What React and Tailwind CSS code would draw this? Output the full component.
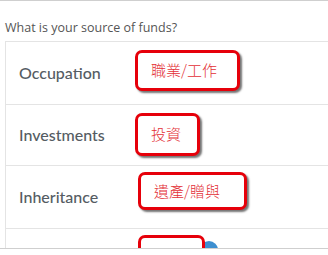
import React from 'react'

const rows = [
  { label: 'Occupation', note: '職業/工作', h: 'h-[63px]', box: 'ml-[26px] -mt-[6px] h-[41px] w-[105px]' },
  { label: 'Investments', note: '投資', h: 'h-[61px]', box: 'ml-[26px] -mt-[2px] h-[43px] w-[65px]' },
  { label: 'Inheritance', note: '遺產/贈與', h: 'h-[63px]', box: 'ml-[29px] -mt-[12px] h-[38px] w-[109px]' },
]

function Note({ text, className }) {
  return (
    <div
      className={`flex items-center pl-[13px] border-[3.5px] border-[#e6000a] rounded-[7px] bg-white shadow-[2px_2px_2px_rgba(0,0,0,0.55)] text-[15px] font-light text-[#e33036] ${className}`}
      style={{ fontFamily: '"Noto Sans CJK TC", sans-serif' }}
    >
      {text}
    </div>
  )
}

export default function App() {
  return (
    <div className="w-[328px] h-[255px] bg-white overflow-hidden border-t border-[#cfcfcf]">
      <div className="h-[248px] border-b border-[#cfcfcf] overflow-hidden pl-[5px]">
        {/* Question */}
        <p
          className="pt-[20px] text-[12.5px] leading-[14px] text-[#555]"
          style={{ fontFamily: '"Open Sans", sans-serif' }}
        >
          What is your source of funds?
        </p>

        {/* Options card */}
        <div className="mt-[6px] border-l border-t border-[#e4e4e4]">
          {rows.map((row) => (
            <div key={row.label} className={`flex items-center border-b border-[#e4e4e4] ${row.h}`}>
              <span
                className="pl-[13px] w-[103px] text-[16px] font-medium text-[#555c63]"
                style={{ fontFamily: 'Lato, sans-serif' }}
              >
                {row.label}
              </span>
              <Note text={row.note} className={row.box} />
            </div>
          ))}

          {/* Partially visible last row */}
          <div className="flex items-start h-[40px] pt-[6px]">
            <div className="ml-[132px] relative">
              <div className="absolute left-[62px] top-[6px] w-[18px] h-[18px] rounded-full bg-[#3d8fd0]" />
              <div className="relative h-[36px] w-[67px] border-[3.5px] border-[#e6000a] rounded-[7px] bg-white" />
            </div>
          </div>
        </div>
      </div>
    </div>
  )
}
